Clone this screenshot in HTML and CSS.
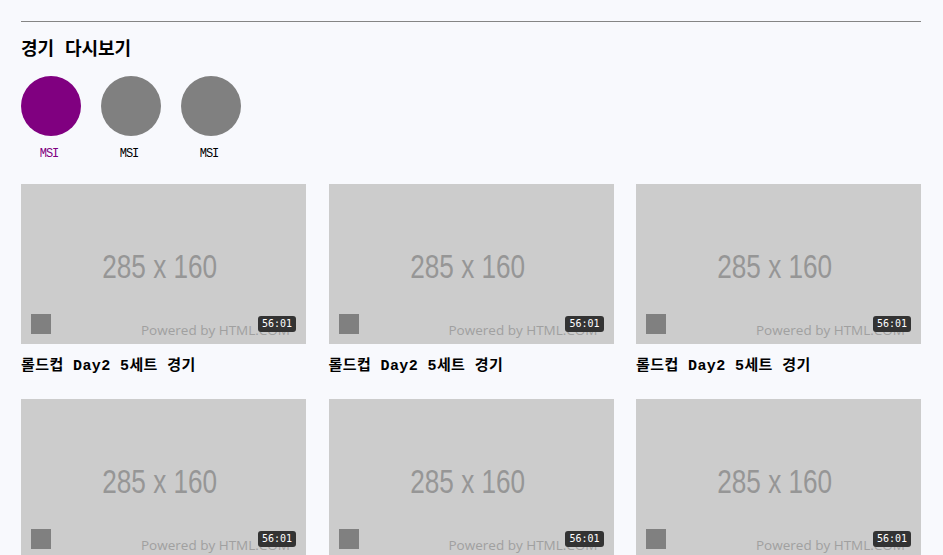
FILE: index.html
```html
<!DOCTYPE html>
<html lang="ko">
<head>
<meta charset="utf-8">
<title>경기 다시보기</title>
<link rel="stylesheet" href="styles.css">
</head>
<body>
<main class="page">
  <hr class="divider">
  <h2 class="section-title">경기 다시보기</h2>
  <ul class="leagues">
    <li class="league active"><span class="league-logo"></span><span class="league-name">MSI</span></li>
    <li class="league"><span class="league-logo"></span><span class="league-name">MSI</span></li>
    <li class="league"><span class="league-logo"></span><span class="league-name">MSI</span></li>
  </ul>
  <div class="videos">
    <article class="video">
      <div class="thumb">
        <span class="thumb-size">285 x 160</span>
        <span class="thumb-credit">Powered by HTML.COM</span>
        <span class="thumb-icon"></span>
        <span class="duration">56:01</span>
      </div>
      <h3 class="video-title">롤드컵 Day2 5세트 경기</h3>
    </article>
    <article class="video">
      <div class="thumb">
        <span class="thumb-size">285 x 160</span>
        <span class="thumb-credit">Powered by HTML.COM</span>
        <span class="thumb-icon"></span>
        <span class="duration">56:01</span>
      </div>
      <h3 class="video-title">롤드컵 Day2 5세트 경기</h3>
    </article>
    <article class="video">
      <div class="thumb">
        <span class="thumb-size">285 x 160</span>
        <span class="thumb-credit">Powered by HTML.COM</span>
        <span class="thumb-icon"></span>
        <span class="duration">56:01</span>
      </div>
      <h3 class="video-title">롤드컵 Day2 5세트 경기</h3>
    </article>
    <article class="video">
      <div class="thumb">
        <span class="thumb-size">285 x 160</span>
        <span class="thumb-credit">Powered by HTML.COM</span>
        <span class="thumb-icon"></span>
        <span class="duration">56:01</span>
      </div>
      <h3 class="video-title">롤드컵 Day2 5세트 경기</h3>
    </article>
    <article class="video">
      <div class="thumb">
        <span class="thumb-size">285 x 160</span>
        <span class="thumb-credit">Powered by HTML.COM</span>
        <span class="thumb-icon"></span>
        <span class="duration">56:01</span>
      </div>
      <h3 class="video-title">롤드컵 Day2 5세트 경기</h3>
    </article>
    <article class="video">
      <div class="thumb">
        <span class="thumb-size">285 x 160</span>
        <span class="thumb-credit">Powered by HTML.COM</span>
        <span class="thumb-icon"></span>
        <span class="duration">56:01</span>
      </div>
      <h3 class="video-title">롤드컵 Day2 5세트 경기</h3>
    </article>
  </div>
</main>
</body>
</html>
```
FILE: styles.css
```css
html, body {
  margin: 0;
  padding: 0;
  background: #f8f9fd;
  color: #000;
  font-family: "Liberation Mono", "Noto Sans CJK KR", monospace;
}

.page {
  width: 900px;
  margin: 0 0 0 21px;
  padding: 21px 0 40px;
}

.divider {
  margin: 0;
  border: 0;
  border-top: 1px solid #858585;
  height: 0;
}

.section-title {
  margin: 16px 0 0;
  font-size: 18px;
  line-height: 24px;
  font-weight: bold;
}

.leagues {
  list-style: none;
  margin: 14px 0 0;
  padding: 0;
  display: flex;
  gap: 20px;
}

.league {
  width: 60px;
  display: flex;
  flex-direction: column;
  align-items: center;
}

.league-logo {
  width: 60px;
  height: 60px;
  border-radius: 50%;
  background: #808080;
}

.league.active .league-logo {
  background: #800080;
}

.league-name {
  margin-top: 11px;
  font-size: 12px;
  line-height: 14px;
  letter-spacing: -1px;
  margin-left: -4px;
}

.league.active .league-name {
  color: #800080;
}

.videos {
  margin-top: 23px;
  display: grid;
  grid-template-columns: repeat(3, 285px);
  column-gap: 22.5px;
  row-gap: 22px;
}

.thumb {
  position: relative;
  height: 160px;
  background: #cccccc;
  display: flex;
  align-items: center;
  justify-content: center;
  overflow: hidden;
}

.thumb-size {
  font-family: "Liberation Sans", Arial, sans-serif;
  font-size: 34px;
  color: #969696;
  transform: scaleX(0.77);
  margin-left: -7px;
  margin-top: 4px;
  white-space: nowrap;
}

.thumb-credit {
  position: absolute;
  left: 120px;
  bottom: 6px;
  font-family: "Open Sans", sans-serif;
  font-size: 13.5px;
  line-height: 16px;
  color: #a0a0a0;
  white-space: nowrap;
}

.thumb-icon {
  position: absolute;
  left: 10px;
  bottom: 10px;
  width: 20px;
  height: 20px;
  background: #808080;
}

.duration {
  position: absolute;
  right: 10px;
  bottom: 12px;
  height: 16px;
  padding: 0 4px;
  border-radius: 3px;
  background: #333333;
  color: #fff;
  font-family: "DejaVu Sans Mono", monospace;
  font-size: 10px;
  line-height: 16px;
}

.video-title {
  margin: 13px 0 0;
  font-size: 15px;
  line-height: 20px;
  font-weight: bold;
  letter-spacing: 0.4px;
}
```
